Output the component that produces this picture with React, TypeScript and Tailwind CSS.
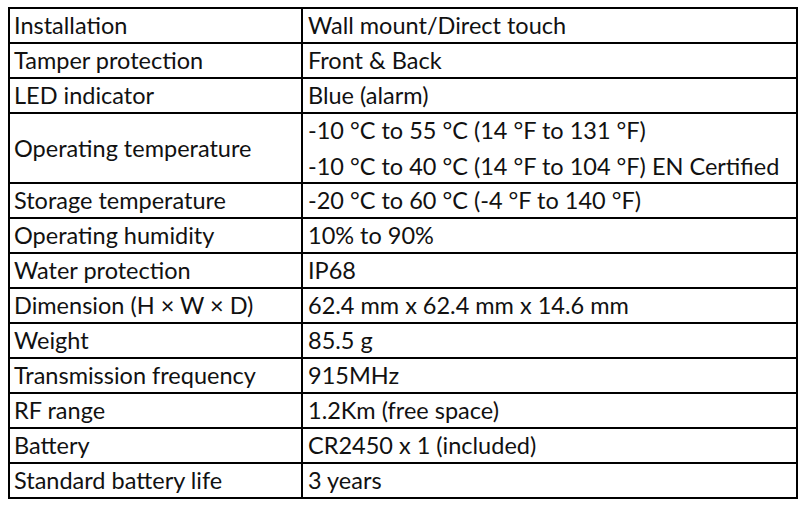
import React from "react";

const rows: { label: string; value: string[] }[] = [
  { label: "Installation", value: ["Wall mount/Direct touch"] },
  { label: "Tamper protection", value: ["Front & Back"] },
  { label: "LED indicator", value: ["Blue (alarm)"] },
  {
    label: "Operating temperature",
    value: [
      "-10 °C to 55 °C (14 °F to 131 °F)",
      "-10 °C to 40 °C (14 °F to 104 °F) EN Certified",
    ],
  },
  { label: "Storage temperature", value: ["-20 °C to 60 °C (-4 °F to 140 °F)"] },
  { label: "Operating humidity", value: ["10% to 90%"] },
  { label: "Water protection", value: ["IP68"] },
  { label: "Dimension (H × W × D)", value: ["62.4 mm x 62.4 mm x 14.6 mm"] },
  { label: "Weight", value: ["85.5 g"] },
  { label: "Transmission frequency", value: ["915MHz"] },
  { label: "RF range", value: ["1.2Km (free space)"] },
  { label: "Battery", value: ["CR2450 x 1 (included)"] },
  { label: "Standard battery life", value: ["3 years"] },
];

export default function App() {
  return (
    <div className="w-[803px] h-[506px] bg-white pt-[7px] pl-[8px]">
      <div
        className="w-[790px] border-2 border-black text-[#111] text-[23.5px] flex flex-col"
        style={{ fontFamily: "Lato, 'Open Sans', sans-serif" }}
      >
        {rows.map((r, i) => (
          <div
            key={r.label}
            className={`flex ${i === 0 ? "" : "border-t-2 border-black"}`}
          >
            <div className="w-[293px] border-r-2 border-black pl-[4px] flex items-center leading-[33px] whitespace-nowrap">
              {r.label}
            </div>
            <div className="flex-1 pl-[5px] flex flex-col whitespace-nowrap">
              {r.value.map((v, j) => (
                <div
                  key={j}
                  className={j === 0 ? "h-[33px] leading-[33px]" : "h-[35px] leading-[35px] pt-[2px]"}
                >
                  {v}
                </div>
              ))}
            </div>
          </div>
        ))}
      </div>
    </div>
  );
}
